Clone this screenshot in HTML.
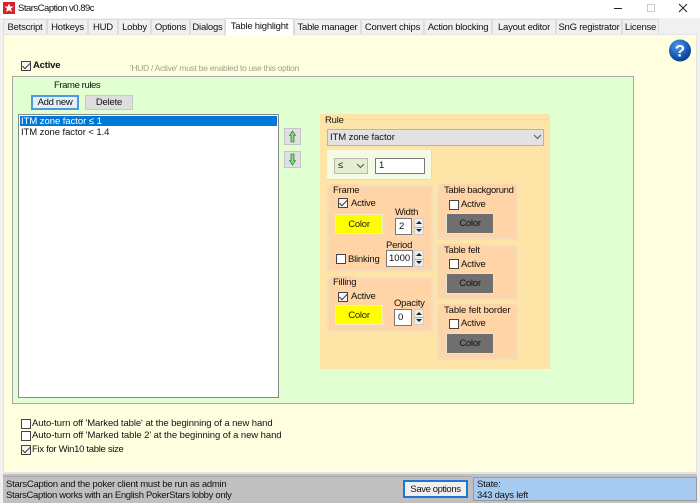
<!DOCTYPE html>
<html><head><meta charset="utf-8">
<style>
html,body{margin:0;padding:0;width:700px;height:503px;overflow:hidden;background:#f0f0f0}
body{position:relative;font-family:"Liberation Sans",sans-serif;font-size:9.5px;color:#111}
div,span.t{position:absolute;box-sizing:border-box}
.t{white-space:nowrap;line-height:12px;letter-spacing:-.22px;margin-top:1px}
.tab{top:19px;height:16px;background:#f0f0f0;border:1px solid #dcdcdc;border-bottom:0;text-align:center;line-height:16px;letter-spacing:-.22px;white-space:nowrap}
.cb{width:10px;height:10px;background:#fff;border:1px solid #444}
.cb.on{background:#f4f4f0}
.cb.on:after{content:"";position:absolute;left:0;top:0;width:7px;height:3px;border-left:1px solid #333;border-bottom:1px solid #333;transform:rotate(-45deg) translate(-.5px,1px)}
.grp{background:#ffd5a8;box-shadow:inset 0 0 0 2px #f5dcbc}
.btn{text-align:center;border:1px solid #d8d8d8;letter-spacing:-.22px;white-space:nowrap}
.y{background:#ffff00;color:#222;width:48px;height:20px;line-height:19px;border-color:#f0f0c0}
.g{background:#6f6f6f;color:#111;width:48px;height:21px;line-height:19px;border-color:#e5e5d5}
.inp{background:#fff;border:1px solid #777;padding-left:3px;line-height:15px}
.spin{width:10px;background:#eee;border:1px solid #ccc}
.spin:before{content:"";position:absolute;left:1px;top:2px;border:3px solid transparent;border-top:0;border-bottom:3px solid #222}
.spin:after{content:"";position:absolute;left:1px;bottom:2px;border:3px solid transparent;border-bottom:0;border-top:3px solid #222}
.spin i{position:absolute;left:0;right:0;top:50%;height:1px;background:#aaa}
</style></head><body>
<div style="left:0;top:0;width:700px;height:18px;background:#fff"></div>
<div style="left:3px;top:2px;width:12px;height:12px;background:#d8202a"></div>
<svg style="position:absolute;left:3px;top:2px" width="12" height="12"><path d="M6 1.500l1.300 3H10.500L8 6.800l1 3.200L6 8.200 3 10l1-3.200L1.500 4.500h3.200z" fill="#fff"/></svg>
<span class="t" style="left:18px;top:2px;letter-spacing:-.5px">StarsCaption v0.89c</span>
<svg style="position:absolute;left:610px;top:0" width="90" height="18"><path d="M4 8.500h8" stroke="#222"/><rect x="37.500" y="4.500" width="7" height="7" fill="none" stroke="#ccc"/><path d="M69 4l8 8M77 4l-8 8" stroke="#222" fill="none"/></svg>

<div class="tab" style="left:3px;width:44px">Betscript</div>
<div class="tab" style="left:47px;width:41px">Hotkeys</div>
<div class="tab" style="left:88px;width:30px">HUD</div>
<div class="tab" style="left:118px;width:33px">Lobby</div>
<div class="tab" style="left:151px;width:39px">Options</div>
<div class="tab" style="left:190px;width:35px">Dialogs</div>
<div class="tab" style="left:294px;width:67px">Table manager</div>
<div class="tab" style="left:361px;width:63px">Convert chips</div>
<div class="tab" style="left:424px;width:68px">Action blocking</div>
<div class="tab" style="left:492px;width:64px">Layout editor</div>
<div class="tab" style="left:556px;width:66px">SnG registrator</div>
<div class="tab" style="left:622px;width:37px">License</div>

<div style="left:3px;top:34px;width:694px;height:439px;background:#ffffdf;border:1px solid #e4e4e4"></div>
<div class="tab" style="left:225px;top:18px;width:69px;height:18px;background:#ffffff;line-height:15px;z-index:2">Table highlight</div>

<svg style="position:absolute;left:668px;top:39px" width="24" height="24"><defs><radialGradient id="h" cx=".4" cy=".3" r=".8"><stop offset="0" stop-color="#4d9be8"/><stop offset=".6" stop-color="#1558b5"/><stop offset="1" stop-color="#0a2f78"/></radialGradient></defs><circle cx="12" cy="11.500" r="11" fill="url(#h)"/><text x="12" y="17.500" font-family="Liberation Sans,sans-serif" font-size="17" font-weight="bold" fill="#fff" text-anchor="middle">?</text></svg>

<div class="cb on" style="left:21px;top:61px"></div>
<span class="t" style="left:33px;top:59px;font-weight:bold;letter-spacing:-.2px">Active</span>
<span class="t" style="left:130px;top:61px;color:#a0a090;font-size:8.500px;letter-spacing:-.29px">'HUD / Active' must be enabled to use this option</span>

<div style="left:12px;top:76px;width:622px;height:328px;background:#e2ffd2;border:1px solid #a8a8a8"></div>
<span class="t" style="left:54px;top:79px;letter-spacing:-.4px">Frame rules</span>
<div class="btn" style="left:31px;top:95px;width:48px;height:15px;background:#e6eef6;border:2px solid #4a9be0;line-height:11px;letter-spacing:-.3px">Add new</div>
<div class="btn" style="left:85px;top:95px;width:48px;height:15px;background:#dedede;border-color:#c8c8c8;line-height:13px">Delete</div>

<div style="left:18px;top:114px;width:261px;height:284px;background:#fff;border:1px solid #888"></div>
<div style="left:20px;top:116px;width:257px;height:10px;background:#0078d7"></div>
<span class="t" style="left:21px;top:115px;color:#fff;letter-spacing:-.05px">ITM zone factor ≤ 1</span>
<span class="t" style="left:21px;top:126px;letter-spacing:-.08px">ITM zone factor &lt; 1.4</span>

<div class="btn" style="left:284px;top:128px;width:17px;height:17px;background:#e0e0e0;border-color:#c4c4c4"></div>
<div class="btn" style="left:284px;top:151px;width:17px;height:17px;background:#e0e0e0;border-color:#c4c4c4"></div>
<svg style="position:absolute;left:284px;top:128px" width="17" height="40"><path d="M8.500 3l3 4.500H10V14H7V7.500H5.500z" fill="#8fd08f" stroke="#2f8f2f" stroke-width=".8"/><path d="M8.500 37l3-4.500H10V26H7v6.500H5.500z" fill="#8fd08f" stroke="#2f8f2f" stroke-width=".8"/></svg>

<div style="left:320px;top:114px;width:230px;height:255px;background:#ffe4a8"></div>
<div style="left:322px;top:119px;width:226px;height:1px;background:#f7d8a8"></div>
<div style="left:325px;top:114px;width:20px;height:12px;background:#ffe4a8"></div>
<span class="t" style="left:325px;top:114px">Rule</span>
<div style="left:327px;top:129px;width:217px;height:17px;background:#e2e2e2;border:1px solid #b4b4b4;line-height:16px;padding-left:2px;letter-spacing:-.08px">ITM zone factor</div>
<svg style="position:absolute;left:533px;top:134px" width="9" height="7"><path d="M1 1l3.500 3.500L8 1" fill="none" stroke="#555"/></svg>

<div style="left:327px;top:150px;width:105px;height:30px;background:#f3fbe2;border-right:1px solid #e8dcb0;border-bottom:1px solid #e8dcb0"></div>
<div style="left:334px;top:158px;width:34px;height:16px;background:#e4ecd2;border:1px solid #b8b8b0;line-height:14px;padding-left:3px">≤</div>
<svg style="position:absolute;left:356px;top:163px" width="9" height="7"><path d="M1 1l3.500 3.500L8 1" fill="none" stroke="#555"/></svg>
<div class="inp" style="left:375px;top:158px;width:50px;height:16px;line-height:14px">1</div>

<div class="grp" style="left:327px;top:185px;width:106px;height:87px"></div>
<div style="left:331px;top:184px;width:27px;height:10px;background:#ffd5a8"></div>
<span class="t" style="left:333px;top:184px">Frame</span>
<div class="cb on" style="left:338px;top:198px"></div>
<span class="t" style="left:351px;top:197px">Active</span>
<span class="t" style="left:395px;top:206px">Width</span>
<div class="btn y" style="left:335px;top:214px">Color</div>
<div class="inp" style="left:395px;top:218px;width:17px;height:17px">2</div>
<div class="spin" style="left:414px;top:218px;height:17px"><i></i></div>
<span class="t" style="left:386px;top:239px">Period</span>
<div class="cb" style="left:336px;top:254px"></div>
<span class="t" style="left:348px;top:253px">Blinking</span>
<div class="inp" style="left:386px;top:250px;width:27px;height:17px;padding-left:2px">1000</div>
<div class="spin" style="left:414px;top:250px;height:17px"><i></i></div>

<div class="grp" style="left:327px;top:277px;width:106px;height:55px"></div>
<div style="left:331px;top:276px;width:24px;height:10px;background:#ffd5a8"></div>
<span class="t" style="left:333px;top:276px">Filling</span>
<div class="cb on" style="left:338px;top:292px"></div>
<span class="t" style="left:351px;top:290px">Active</span>
<span class="t" style="left:394px;top:297px">Opacity</span>
<div class="btn y" style="left:335px;top:305px">Color</div>
<div class="inp" style="left:394px;top:309px;width:18px;height:17px">0</div>
<div class="spin" style="left:414px;top:309px;height:16px"><i></i></div>

<div class="grp" style="left:437px;top:185px;width:81px;height:55px"></div>
<div style="left:441px;top:184px;width:75px;height:10px;background:#ffd5a8"></div>
<span class="t" style="left:444px;top:184px;letter-spacing:-.34px">Table backgorund</span>
<div class="cb" style="left:449px;top:200px"></div>
<span class="t" style="left:461px;top:198px">Active</span>
<div class="btn g" style="left:446px;top:213px">Color</div>

<div class="grp" style="left:437px;top:245px;width:81px;height:55px"></div>
<div style="left:441px;top:244px;width:40px;height:10px;background:#ffd5a8"></div>
<span class="t" style="left:444px;top:244px">Table felt</span>
<div class="cb" style="left:449px;top:259px"></div>
<span class="t" style="left:461px;top:258px">Active</span>
<div class="btn g" style="left:446px;top:333px;top:273px">Color</div>

<div class="grp" style="left:437px;top:305px;width:81px;height:55px"></div>
<div style="left:441px;top:304px;width:72px;height:10px;background:#ffd5a8"></div>
<span class="t" style="left:444px;top:304px;letter-spacing:-.1px">Table felt border</span>
<div class="cb" style="left:449px;top:319px"></div>
<span class="t" style="left:461px;top:317px">Active</span>
<div class="btn g" style="left:446px;top:333px">Color</div>

<div class="cb" style="left:21px;top:419px"></div>
<span class="t" style="left:32px;top:417px;letter-spacing:-.09px">Auto-turn off 'Marked table' at the beginning of a new hand</span>
<div class="cb" style="left:21px;top:431px"></div>
<span class="t" style="left:32px;top:429px;letter-spacing:-.07px">Auto-turn off 'Marked table 2' at the beginning of a new hand</span>
<div class="cb on" style="left:21px;top:445px"></div>
<span class="t" style="left:32px;top:443px;letter-spacing:-.3px">Fix for Win10 table size</span>

<div style="left:3px;top:473px;width:694px;height:30px;background:#c0c0c0;border-top:1px solid #e4e4e4"></div>
<div style="left:3px;top:476px;width:468px;height:1px;background:#a8a8a8"></div>
<span class="t" style="left:6px;top:478px;letter-spacing:-.26px">StarsCaption and the poker client must be run as admin</span>
<span class="t" style="left:6px;top:489px;letter-spacing:-.33px">StarsCaption works with an English PokerStars lobby only</span>
<div class="btn" style="left:403px;top:480px;width:65px;height:18px;background:#efefef;border:2px solid #1c78d0;line-height:15px;letter-spacing:-.4px">Save options</div>
<div style="left:473px;top:477px;width:224px;height:24px;background:#a6caf0;border:1px solid #9a9a9a"></div>
<span class="t" style="left:477px;top:478px">State:</span>
<span class="t" style="left:477px;top:489px">343 days left</span>
</body></html>
